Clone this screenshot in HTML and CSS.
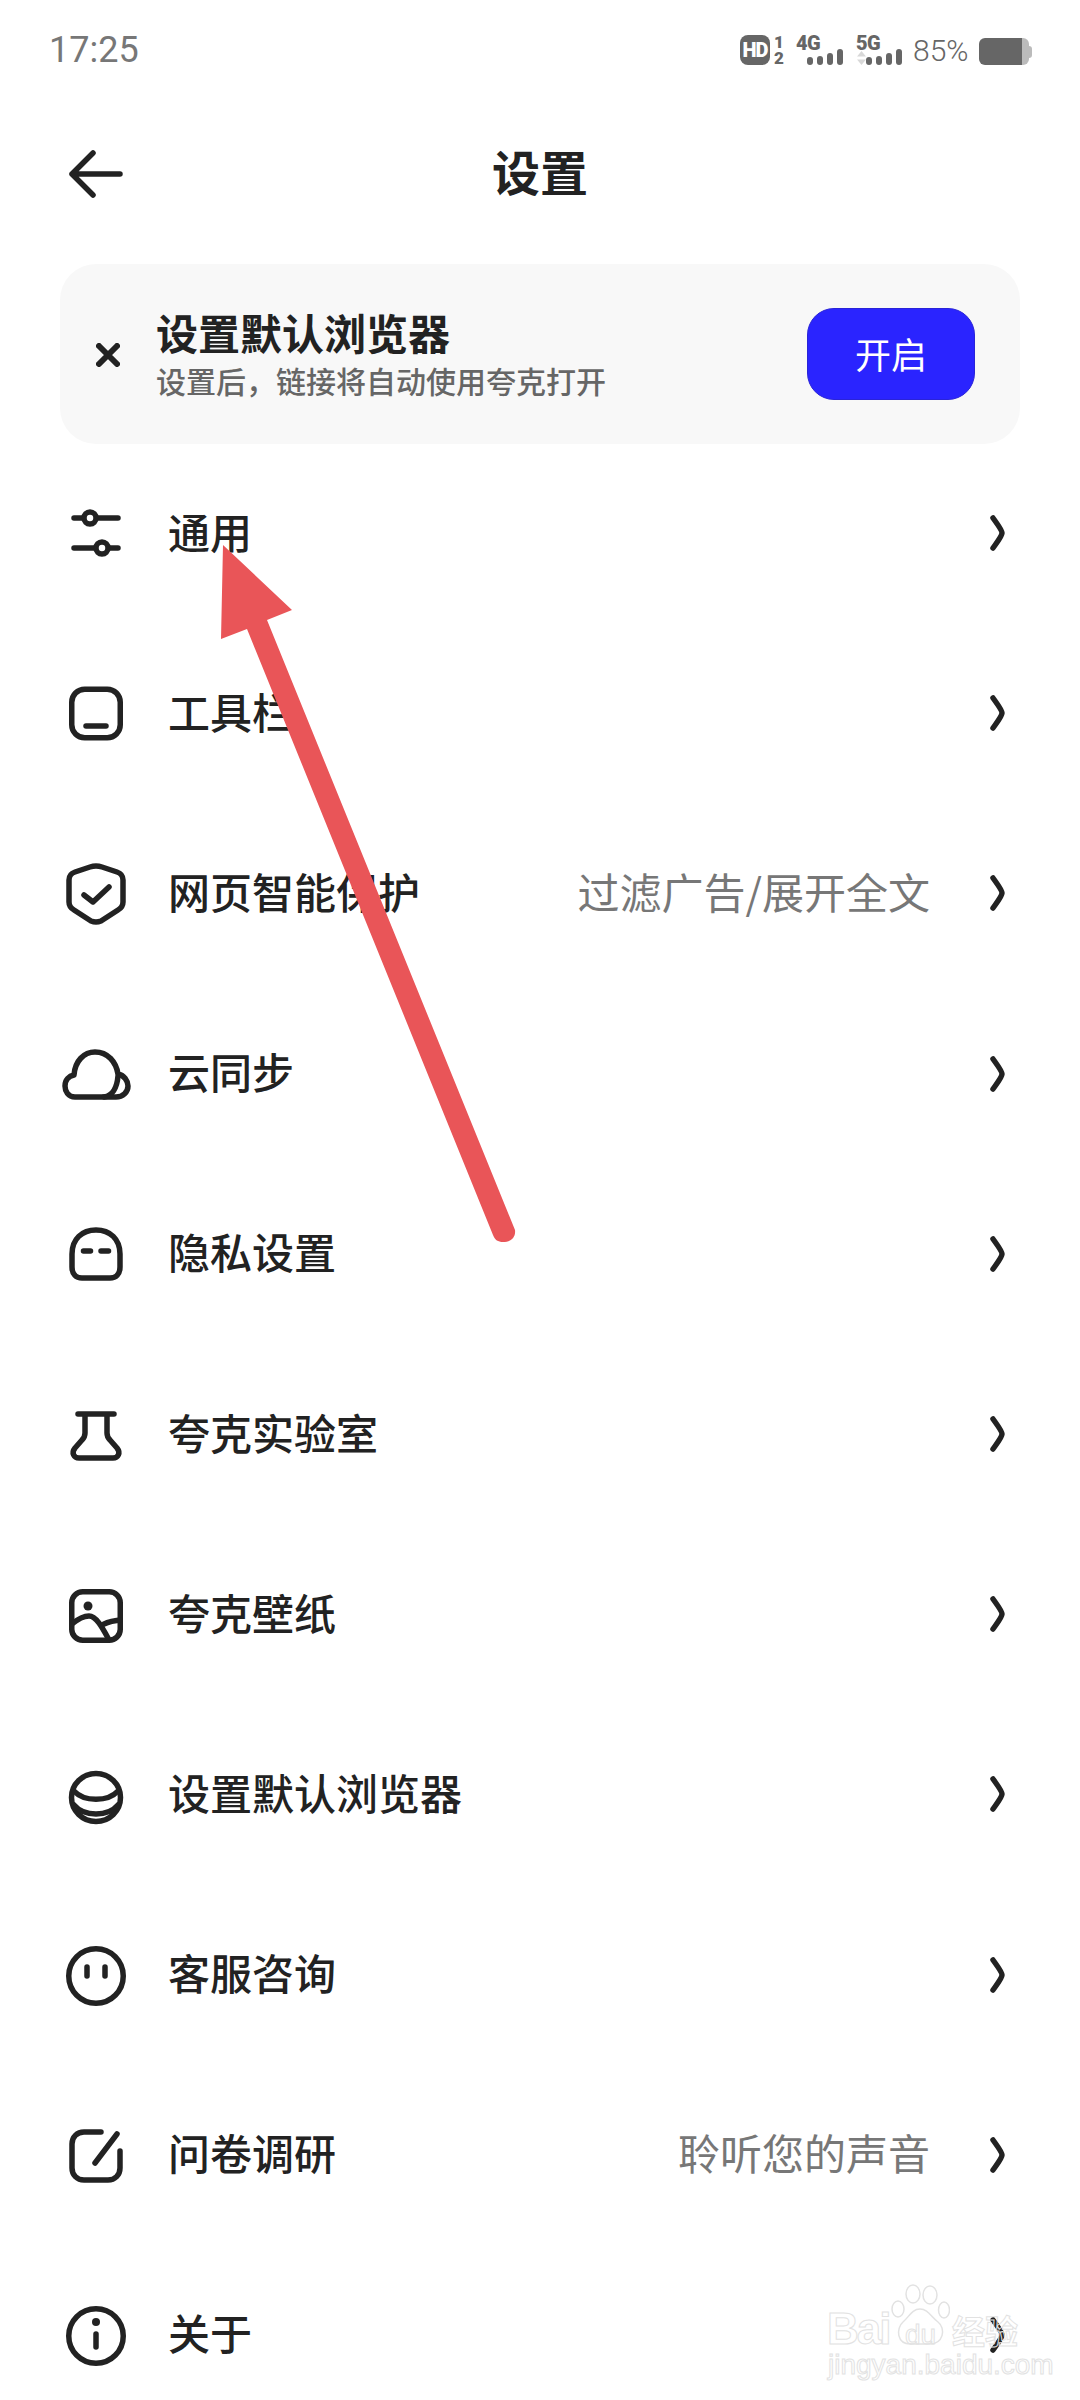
FILE: index.html
```html
<!doctype html>
<html>
<head>
<meta charset="utf-8">
<title>设置</title>
<link rel="stylesheet" href="styles.css">
</head>
<body>

<div class="page">

	<div class="statusBar">
		<span class="time">17:25</span>
		<div class="statusIcons">
			<span class="hd">HD</span>
			<span class="simNums"><span>1</span><span>2</span></span>
			<div class="signal sigFour">
				<span class="netType">4G</span>
				<div class="bars"><i class="b1"></i><i class="b2"></i><i class="b3"></i><i class="b4"></i></div>
			</div>
			<div class="signal sigFive">
				<span class="netType">5G</span>
				<svg class="updown" viewBox="0 0 9 14"><path d="M4.5 0L9 5.500H0Z" fill="#d8d8d8"/><path d="M4.500 14L0 8.500H9Z" fill="#d8d8d8"/></svg>
				<div class="bars"><i class="b1"></i><i class="b2"></i><i class="b3"></i><i class="b4"></i></div>
			</div>
			<span class="percent">85%</span>
			<div class="battery"><div class="batteryFill"></div><div class="batteryRest"></div><div class="batteryNub"></div></div>
		</div>
	</div>

	<div class="header">
		<svg class="back" viewBox="0 0 54 48"><path d="M24 3L3 24L24 45M3 24H51" /></svg>
		<h1>设置</h1>
	</div>

	<div class="banner">
		<svg class="close" viewBox="0 0 24 24"><path d="M3 3L21 21M21 3L3 21" /></svg>
		<div class="bannerText">
			<div class="bannerTitle">设置默认浏览器</div>
			<div class="bannerSub">设置后，链接将自动使用夸克打开</div>
		</div>
		<button class="openBtn">开启</button>
	</div>

	<div class="list">
		<div class="row">
			<svg class="icon" viewBox="0 0 60 60"><path d="M8 16H52M8 46H52"/><circle class="knob" cx="24" cy="16" r="6"/><circle class="knob" cx="36" cy="46" r="6"/></svg>
			<span class="name">通用</span>
			<svg class="chev" viewBox="0 0 20 36"><path d="M5 3C10 10 14 15 14 18C14 21 10 26 5 33"/></svg>
		</div>
		<div class="row">
			<svg class="icon" viewBox="0 0 60 60"><rect x="5.750" y="7.250" width="48.500" height="48.500" rx="13"/><path d="M20 44H40"/></svg>
			<span class="name">工具栏</span>
			<svg class="chev" viewBox="0 0 20 36"><path d="M5 3C10 10 14 15 14 18C14 21 10 26 5 33"/></svg>
		</div>
		<div class="row">
			<svg class="icon" viewBox="0 0 60 60"><path d="M30 4Q33 4 36 5L51 10Q57 12 57 18V40Q57 45 52 48L35 59Q30 61 25 59L8 48Q3 45 3 40V18Q3 12 9 10L24 5Q27 4 30 4Z"/><path d="M18 33L27 40L43 25"/></svg>
			<span class="name">网页智能保护</span>
			<span class="value">过滤广告/展开全文</span>
			<svg class="chev" viewBox="0 0 20 36"><path d="M5 3C10 10 14 15 14 18C14 21 10 26 5 33"/></svg>
		</div>
		<div class="row">
			<svg class="icon" viewBox="0 0 60 60"><path d="M9 54C2 54 -1 48 -1 43C-1 37 3 33 8 32C9 18 18 9 29 9C42 9 50 19 52 31C58 32 62 38 62 43C62 49 57 54 50 54Z"/><path d="M38 54C46 53 51 45 52 33"/></svg>
			<span class="name">云同步</span>
			<svg class="chev" viewBox="0 0 20 36"><path d="M5 3C10 10 14 15 14 18C14 21 10 26 5 33"/></svg>
		</div>
		<div class="row">
			<svg class="icon" viewBox="0 0 60 60"><path d="M6 44V31C6 16 16 7 30 7C44 7 54 16 54 31V44C54 51 50 55 44 55H16C10 55 6 51 6 44Z"/><path d="M17.500 28H24.500M35 28H42.500"/></svg>
			<span class="name">隐私设置</span>
			<svg class="chev" viewBox="0 0 20 36"><path d="M5 3C10 10 14 15 14 18C14 21 10 26 5 33"/></svg>
		</div>
		<div class="row">
			<svg class="icon" viewBox="0 0 60 60"><path d="M12 11H48M19 11V30Q19 34 16 37L9 45C5 50 8 55 13 55H47C52 55 55 50 51 45L44 37Q41 34 41 30V11"/></svg>
			<span class="name">夸克实验室</span>
			<svg class="chev" viewBox="0 0 20 36"><path d="M5 3C10 10 14 15 14 18C14 21 10 26 5 33"/></svg>
		</div>
		<div class="row">
			<svg class="icon" viewBox="0 0 60 60"><rect x="5.750" y="8.750" width="48.500" height="48.500" rx="11"/><circle class="dot" cx="22" cy="23" r="4.500"/><path d="M6 41C12 36 18 33 23 33C30 33 36 44 42 55M35 43C41 38 48 38 54 37"/></svg>
			<span class="name">夸克壁纸</span>
			<svg class="chev" viewBox="0 0 20 36"><path d="M5 3C10 10 14 15 14 18C14 21 10 26 5 33"/></svg>
		</div>
		<div class="row">
			<svg class="icon" viewBox="0 0 60 60"><ellipse cx="30" cy="34.500" rx="24.500" ry="24"/><path d="M8 28C18 39 42 39 52 28M8 42C18 54 42 54 52 42"/></svg>
			<span class="name">设置默认浏览器</span>
			<svg class="chev" viewBox="0 0 20 36"><path d="M5 3C10 10 14 15 14 18C14 21 10 26 5 33"/></svg>
		</div>
		<div class="row">
			<svg class="icon" viewBox="0 0 60 60"><circle cx="30" cy="32" r="27.250"/><path d="M21 23V32M39 23V32"/></svg>
			<span class="name">客服咨询</span>
			<svg class="chev" viewBox="0 0 20 36"><path d="M5 3C10 10 14 15 14 18C14 21 10 26 5 33"/></svg>
		</div>
		<div class="row">
			<svg class="icon" viewBox="0 0 60 60"><path d="M35 8H18C11 8 6 13 6 20V44C6 51 11 56 18 56H42C49 56 54 51 54 44V27M51 10L29 39"/></svg>
			<span class="name">问卷调研</span>
			<span class="value">聆听您的声音</span>
			<svg class="chev" viewBox="0 0 20 36"><path d="M5 3C10 10 14 15 14 18C14 21 10 26 5 33"/></svg>
		</div>
		<div class="row">
			<svg class="icon" viewBox="0 0 60 60"><circle cx="30" cy="32" r="27.250"/><circle class="dot" cx="30" cy="18" r="4"/><path d="M30 30V43"/></svg>
			<span class="name">关于</span>
			<svg class="chev" viewBox="0 0 20 36"><path d="M5 3C10 10 14 15 14 18C14 21 10 26 5 33"/></svg>
		</div>
	</div>

	<!-- red annotation arrow drawn over the list -->
	<svg class="annotation" viewBox="0 0 1080 2400">
		<path d="M223 545L292 610L267 620L515 1230C516 1238 510 1242 503 1242C498 1242 495 1240 493 1235L247 629L221 639Z"/>
	</svg>

	<!-- watermark -->
	<div class="watermark">
		<svg class="paw" viewBox="0 0 60 62">
			<ellipse cx="23" cy="10" rx="7" ry="9"/>
			<ellipse cx="40" cy="11" rx="7" ry="9"/>
			<ellipse cx="8" cy="25" rx="6" ry="8"/>
			<ellipse cx="54" cy="26" rx="5.500" ry="8"/>
			<path d="M30 25C22 25 19 33 13 38C6 44 6 61 22 60C27 60 33 60 38 60C54 61 56 44 48 38C41 33 38 25 30 25Z"/>
		</svg>
		<span class="wmBai">Bai</span>
		<span class="wmDu">du</span>
		<span class="wmJing">经验</span>
		<span class="wmUrl">jingyan.baidu.com</span>
	</div>

</div>

</body>
</html>
```

FILE: styles.css
```css
* {
	box-sizing: border-box;
}
body {
	margin: 0px;
	background-color: white;
	font-family: "Noto Sans CJK SC", "Noto Sans", sans-serif;
	color: #222222;
}
.page {
	position: relative;
	width: 1080px;
	height: 2400px;
	overflow: hidden;
}

/* status bar */
.statusBar {
	display: flex;
	justify-content: space-between;
	align-items: center;
	height: 100px;
	padding: 0px 48px 0px 49px;
}
.time {
	font-family: Roboto, sans-serif;
	font-size: 36px;
	color: #777777;
}
.statusIcons {
	display: flex;
	align-items: center;
	height: 30px;
	color: #666666;
}
.hd {
	display: flex;
	align-items: center;
	justify-content: center;
	width: 30px;
	height: 30px;
	border-radius: 8px;
	background-color: #666666;
	color: white;
	font-family: Roboto, sans-serif;
	font-size: 20px;
	font-weight: 900;
	letter-spacing: -1px;
}
.simNums {
	display: flex;
	flex-direction: column;
	justify-content: space-between;
	width: 9px;
	height: 30px;
	margin-left: 4px;
	font-family: Roboto, sans-serif;
	font-size: 17px;
	font-weight: 900;
	line-height: 14px;
}
.signal {
	position: relative;
	width: 47px;
	height: 30px;
	margin-left: 13px;
}
.sigFive {
	width: 46px;
}
.netType {
	position: absolute;
	left: 0px;
	top: 0px;
	font-family: Roboto, sans-serif;
	font-size: 20px;
	font-weight: 900;
	line-height: 16px;
	letter-spacing: -0.5px;
}
.updown {
	position: absolute;
	left: 1px;
	top: 16px;
	width: 9px;
	height: 14px;
}
.bars {
	position: absolute;
	right: 0px;
	bottom: 0px;
	display: flex;
	align-items: flex-end;
	gap: 4px;
	height: 16px;
}
.bars i {
	display: block;
	width: 6px;
	border-radius: 3px;
	background-color: #666666;
}
.b1 {
	height: 8px;
}
.b2 {
	height: 9px;
}
.b3 {
	height: 12px;
}
.b4 {
	height: 16px;
}
.percent {
	width: 56px;
	margin-left: 11px;
	font-family: Roboto, sans-serif;
	font-size: 30px;
	font-weight: 300;
	color: #666666;
	white-space: nowrap;
}
.battery {
	display: flex;
	align-items: center;
	margin-left: 10px;
	width: 53px;
	height: 27px;
	margin-top: 3px;
}
.batteryFill {
	width: 43px;
	height: 27px;
	border-radius: 6px 0px 0px 6px;
	background-color: #666666;
}
.batteryRest {
	width: 7px;
	height: 27px;
	border-radius: 0px 6px 6px 0px;
	background-color: #bbbbbb;
}
.batteryNub {
	width: 3px;
	height: 12px;
	border-radius: 0px 3px 3px 0px;
	background-color: #bbbbbb;
}

/* header */
.header {
	position: relative;
	display: flex;
	justify-content: center;
	align-items: center;
	height: 148px;
}
.header h1 {
	margin: 0px 0px 8px 0px;
	font-size: 48px;
	font-weight: 700;
	line-height: 60px;
}
.back {
	position: absolute;
	left: 69px;
	top: 50px;
	width: 54px;
	height: 48px;
	fill: none;
	stroke: #222222;
	stroke-width: 5.500;
	stroke-linecap: round;
	stroke-linejoin: round;
}

/* default browser banner */
.banner {
	display: flex;
	align-items: center;
	width: 960px;
	height: 180px;
	margin: 16px 0px 0px 60px;
	padding: 0px 45px 0px 36px;
	border-radius: 36px;
	background-color: #f8f8f8;
}
.close {
	flex-shrink: 0;
	width: 24px;
	height: 24px;
	margin-top: 2px;
	fill: none;
	stroke: #222222;
	stroke-width: 6;
	stroke-linecap: round;
}
.bannerText {
	flex-grow: 1;
	margin-left: 36px;
}
.bannerTitle {
	font-size: 42px;
	font-weight: 700;
	line-height: 48px;
}
.bannerSub {
	margin-top: 4px;
	font-size: 30px;
	font-weight: 500;
	line-height: 40px;
	color: #666666;
}
.openBtn {
	width: 168px;
	height: 92px;
	padding-bottom: 4px;
	border: 1px solid #2a24d8;
	border-radius: 27px;
	background-color: #2a24ff;
	color: white;
	font-family: inherit;
	font-size: 36px;
}

/* settings list */
.list {
	margin-top: -2px;
}
.row {
	display: flex;
	align-items: center;
	height: 180.200px;
	padding: 0px 72px 0px 66px;
}
.icon {
	flex-shrink: 0;
	width: 60px;
	height: 60px;
	overflow: visible;
	fill: none;
	stroke: #222222;
	stroke-width: 5.500;
	stroke-linecap: round;
	stroke-linejoin: round;
}
.icon .knob {
	fill: white;
}
.icon .dot {
	fill: #222222;
	stroke: none;
}
.name {
	margin-left: 42px;
	padding-bottom: 4px;
	font-size: 42px;
	font-weight: 500;
}
.value {
	margin-left: auto;
	padding-bottom: 4px;
	font-size: 42px;
	color: #777777;
}
.chev {
	flex-shrink: 0;
	width: 20px;
	height: 36px;
	margin-top: 2px;
	margin-left: auto;
	fill: none;
	stroke: #222222;
	stroke-width: 5.500;
	stroke-linecap: round;
}
.value + .chev {
	margin-left: 58px;
}

/* overlays */
.annotation {
	position: absolute;
	left: 0px;
	top: 0px;
	width: 1080px;
	height: 2400px;
	fill: #e95558;
}
.watermark {
	position: absolute;
	left: 828px;
	top: 2284px;
	width: 200px;
	height: 96px;
	color: transparent;
	-webkit-text-stroke: 1px #e2e2e2;
	font-family: "Liberation Sans", sans-serif;
}
.paw {
	position: absolute;
	left: 62px;
	top: 0px;
	width: 60px;
	height: 62px;
	fill: none;
	stroke: #e2e2e2;
	stroke-width: 1.500;
}
.wmBai {
	position: absolute;
	left: -1px;
	top: 20px;
	font-size: 44px;
	font-weight: 700;
	line-height: 50px;
	letter-spacing: -2px;
}
.wmDu {
	position: absolute;
	left: 77px;
	top: 36px;
	font-size: 28px;
	line-height: 30px;
}
.wmJing {
	position: absolute;
	left: 124px;
	top: 26px;
	font-family: "Noto Sans CJK SC", sans-serif;
	font-size: 33px;
	font-weight: 700;
	line-height: 40px;
}
.wmUrl {
	position: absolute;
	left: 0px;
	top: 66px;
	font-size: 28px;
	line-height: 30px;
	white-space: nowrap;
}
```
